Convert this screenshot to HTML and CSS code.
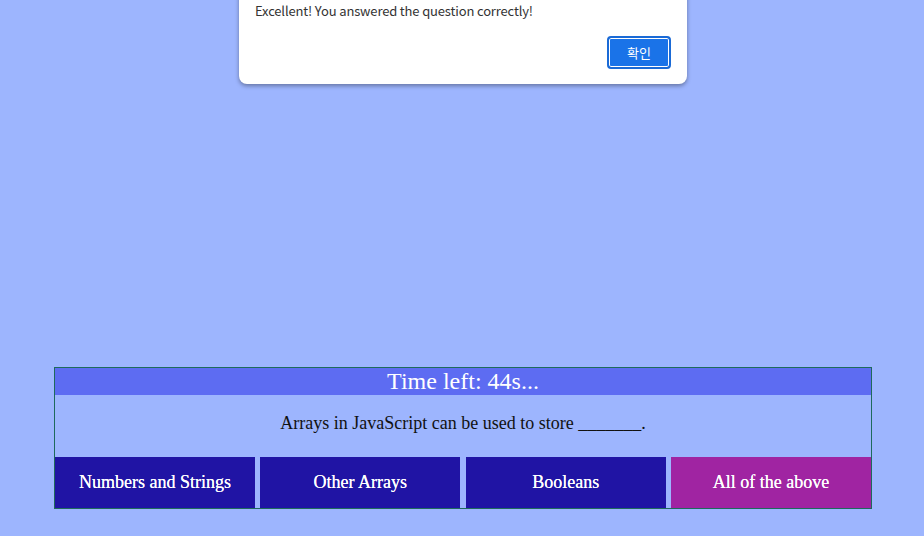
FILE: index.html
```html
<!DOCTYPE html>
<html lang="en">
<head>
<meta charset="utf-8">
<title>Quiz</title>
<link rel="stylesheet" href="styles.css">
</head>
<body>
  <div class="dialog">
    <p class="dialog-msg">Excellent! You answered the question correctly!</p>
    <div class="dialog-actions">
      <button class="dialog-btn">확인</button>
    </div>
  </div>
  <main class="quiz">
    <div class="timer">Time left: 44s...</div>
    <div class="question">Arrays in JavaScript can be used to store _______.</div>
    <div class="answers">
      <div class="answer">Numbers and Strings</div>
      <div class="answer">Other Arrays</div>
      <div class="answer">Booleans</div>
      <div class="answer answer-correct">All of the above</div>
    </div>
  </main>
</body>
</html>
```
FILE: styles.css
```css
html, body {
  margin: 0;
  padding: 0;
}
body {
  background: #9db5fe;
  width: 924px;
  height: 536px;
  overflow: hidden;
  font-family: "Liberation Serif", "Times New Roman", serif;
  padding-top: 367px;
  box-sizing: border-box;
  position: relative;
}
.quiz {
  width: 818px;
  margin: 0 0 0 54px;
  border: 1px solid #1e6a5c;
  box-sizing: border-box;
}
.timer {
  background: #5d6cf2;
  color: #fff;
  font-size: 24px;
  height: 27px;
  line-height: 27px;
  text-align: center;
}
.question {
  height: 62px;
  box-sizing: border-box;
  padding-top: 18px;
  font-size: 18px;
  line-height: 21px;
  text-align: center;
  color: #111;
}
.answers {
  display: flex;
  justify-content: space-between;
}
.answer {
  width: 200px;
  height: 51px;
  background: #2014a4;
  color: #fff;
  font-size: 18px;
  display: flex;
  align-items: center;
  justify-content: center;
  text-shadow: 0 0 0.4px #fff;
}
.answer-correct {
  background: #a024a2;
}
.dialog {
  position: absolute;
  left: 239px;
  top: -20px;
  width: 448px;
  height: 104px;
  background: #fff;
  border-radius: 8px;
  box-shadow: 0 2px 4px rgba(0,0,0,0.35);
  box-sizing: border-box;
  padding: 22px 16px 0 16px;
  font-family: "Noto Sans CJK KR", "Noto Sans", sans-serif;
}
.dialog-msg {
  margin: 0;
  font-size: 13px;
  line-height: 18px;
  color: #333;
  letter-spacing: -0.15px;
}
.dialog-actions {
  display: flex;
  justify-content: flex-end;
  margin-top: 16px;
}
.dialog-btn {
  width: 64px;
  height: 33px;
  border: 2px solid #1a6ad6;
  border-radius: 4px;
  box-shadow: inset 0 0 0 1px #fff;
  background: #1a73e8;
  color: #fff;
  font-family: "Noto Sans CJK KR", sans-serif;
  font-size: 13px;
  padding: 0;
}
```
